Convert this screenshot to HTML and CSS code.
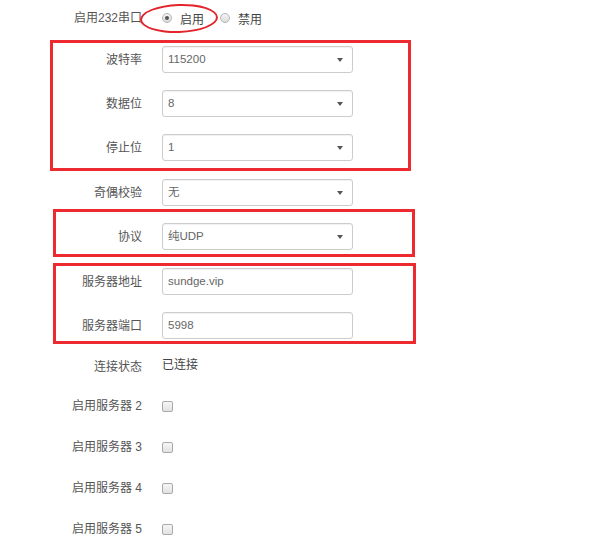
FILE: index.html
```html
<!DOCTYPE html>
<html lang="zh-CN">
<head>
<meta charset="utf-8">
<title>串口设置</title>
<link rel="stylesheet" href="styles.css">
</head>
<body>
<div class="form">
  <div class="row row-text top">
    <span class="lbl">启用232串口</span>
    <div class="ctl radios">
      <span class="radio checked"></span><span class="opt opt-on">启用</span>
      <span class="radio"></span><span class="opt">禁用</span>
      <span class="mark-ellipse"></span>
    </div>
  </div>

  <div class="group g1">
    <div class="row"><span class="lbl">波特率</span><div class="ctl field select">115200</div></div>
    <div class="row"><span class="lbl">数据位</span><div class="ctl field select">8</div></div>
    <div class="row"><span class="lbl">停止位</span><div class="ctl field select">1</div></div>
  </div>

  <div class="row parity"><span class="lbl">奇偶校验</span><div class="ctl field select">无</div></div>

  <div class="group g2">
    <div class="row"><span class="lbl">协议</span><div class="ctl field select">纯UDP</div></div>
  </div>

  <div class="group g3">
    <div class="row"><span class="lbl">服务器地址</span><div class="ctl field">sundge.vip</div></div>
    <div class="row"><span class="lbl">服务器端口</span><div class="ctl field">5998</div></div>
  </div>

  <div class="row row-text status"><span class="lbl">连接状态</span><div class="ctl value">已连接</div></div>

  <div class="checks">
    <div class="row row-text"><span class="lbl">启用服务器 2</span><div class="ctl"><span class="check"></span></div></div>
    <div class="row row-text"><span class="lbl">启用服务器 3</span><div class="ctl"><span class="check"></span></div></div>
    <div class="row row-text"><span class="lbl">启用服务器 4</span><div class="ctl"><span class="check"></span></div></div>
    <div class="row row-text"><span class="lbl">启用服务器 5</span><div class="ctl"><span class="check"></span></div></div>
  </div>
</div>
</body>
</html>
```

FILE: styles.css
```css
* { box-sizing: border-box; }

html, body {
  margin: 0;
  padding: 0;
  background: #ffffff;
}

body {
  font-family: "Liberation Sans", "Noto Sans CJK SC", sans-serif;
  font-size: 12px;
  color: #555555;
  width: 600px;
  height: 548px;
  overflow: hidden;
}

.form {
  --lw: 142px;
  padding-top: 8px;
}

.row {
  display: grid;
  grid-template-columns: var(--lw) 191px;
  column-gap: 20px;
  align-items: center;
  height: 27px;
}

.row-text {
  height: 20px;
}

.lbl {
  text-align: right;
  white-space: nowrap;
  color: #555555;
  line-height: 20px;
}

.ctl {
  position: relative;
}

/* radios */
.radios {
  display: flex;
  align-items: center;
  height: 20px;
}

.radio {
  width: 10px;
  height: 10px;
  border-radius: 50%;
  border: 1px solid #b5b5b5;
  background: linear-gradient(#f4f4f4, #dcdcdc);
  position: relative;
  margin-right: 8px;
  flex: none;
}

.radio.checked::after {
  content: "";
  position: absolute;
  left: 2px;
  top: 2px;
  width: 4px;
  height: 4px;
  border-radius: 50%;
  background: #555555;
}

.opt {
  color: #444444;
}

.opt-on {
  margin-right: 16px;
}

.mark-ellipse {
  position: absolute;
  left: -22px;
  top: -4px;
  width: 78px;
  height: 29px;
  border: 2.5px solid #e3242b;
  border-radius: 50%;
  transform: rotate(-2deg);
  pointer-events: none;
}

/* groups (red annotation boxes) */
.group {
  border: 3px solid #ec2a30;
}

.g1 {
  --lw: 89px;
  margin-left: 50px;
  width: 361px;
  margin-top: 12px;
  padding: 3px 0 7px;
  display: flex;
  flex-direction: column;
  gap: 17px;
}

.parity {
  margin-top: 8px;
}

.g2 {
  --lw: 86px;
  margin-left: 53px;
  width: 362px;
  margin-top: 3px;
  padding: 11px 0 4px;
}

.g3 {
  --lw: 86px;
  margin-left: 53px;
  width: 363px;
  margin-top: 6px;
  padding: 2px 0 2px;
  display: flex;
  flex-direction: column;
  gap: 17px;
}

/* fields */
.field {
  height: 27px;
  border: 1px solid #cccccc;
  border-radius: 3px;
  box-shadow: inset 0 1px 1px rgba(0, 0, 0, 0.06);
  background: #ffffff;
  padding-left: 5px;
  font-size: 11.5px;
  line-height: 25px;
  color: #666666;
}

.select::after {
  content: "";
  position: absolute;
  right: 9px;
  top: 11px;
  border-left: 3px solid transparent;
  border-right: 3px solid transparent;
  border-top: 4px solid #555555;
}

.status {
  margin-top: 13px;
}

.value {
  color: #444444;
  line-height: 20px;
  margin-top: -4px;
}

.checks {
  margin-top: 19px;
  display: flex;
  flex-direction: column;
  gap: 21px;
}

.check {
  display: block;
  width: 11px;
  height: 11px;
  border: 1px solid #a9a9a9;
  border-radius: 2px;
  background: linear-gradient(#f6f6f6, #e2e2e2);
}
```
